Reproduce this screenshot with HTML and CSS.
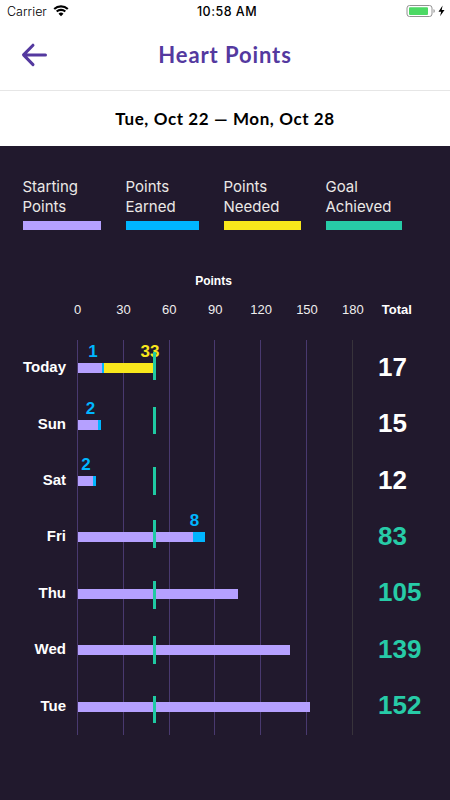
FILE: index.html
```html
<!DOCTYPE html>
<html lang="en">
<head>
  <meta charset="UTF-8">
  <meta name="viewport" content="width=device-width, initial-scale=1.0">
  <title>Heart Points</title>
  <link rel="stylesheet" href="styles.css">
</head>
<body>
  <div class="status-bar">
    <div class="carrier">
      <span>Carrier</span>
      <svg width="16" height="12" viewBox="0 0 16 12">
        <path d="M1.2 4.1a9.8 9.8 0 0 1 13.6 0M3.7 6.6a6.2 6.2 0 0 1 8.6 0" fill="none" stroke="#000" stroke-width="2.1"/>
        <path d="M8 11.3L5.5 8.8a3.6 3.6 0 0 1 5 0z"/>
      </svg>
    </div>
    <div class="time">10:58 AM</div>
    <div class="battery">
      <svg width="40" height="14" viewBox="0 0 40 14">
        <rect x="1" y="1.5" width="25" height="11" rx="2.5" fill="#fff" stroke="#929292"/>
        <rect x="3" y="3.2" width="19" height="7.8" rx="1" fill="#4cd964"/>
        <path d="M27.5 5v4q1.3-.6 1.3-2t-1.3-2z" fill="#929292"/>
        <path d="M36.6 1.4L32.5 7.7h2.6l-1 4.5L38.5 6h-2.8z"/>
      </svg>
    </div>
  </div>

  <header class="header">
    <svg class="back" width="28" height="26" viewBox="0 0 28 26">
      <path d="M13 3.2L3.5 12.9L13 22.6M4 12.9H25.5" fill="none" stroke="#54399f" stroke-width="3" stroke-linecap="round" stroke-linejoin="round"/>
    </svg>
    <h1>Heart Points</h1>
  </header>

  <div class="date-range">Tue, Oct 22 — Mon, Oct 28</div>

  <main class="content">
    <div class="legend">
      <div class="legend-item starting">Starting<br>Points</div>
      <div class="legend-item earned">Points<br>Earned</div>
      <div class="legend-item needed">Points<br>Needed</div>
      <div class="legend-item achieved">Goal<br>Achieved</div>
    </div>

    <div class="axis-title">Points</div>
    <div class="axis">
      <div class="scale">
        <span>0</span><span>30</span><span>60</span><span>90</span><span>120</span><span>150</span><span>180</span>
      </div>
      <div class="total-title">Total</div>
    </div>

    <div class="chart">
      <div class="gridlines">
        <i></i><i></i><i></i><i></i><i></i><i></i><i></i>
      </div>
      <div id="rows" class="rows"></div>
    </div>
  </main>

  <script src="chart.js"></script>
</body>
</html>
```
FILE: styles.css
```css
* {
  box-sizing: border-box;
}
body {
  margin: 0;
  width: 450px;
  height: 800px;
  overflow: hidden;
  display: flex;
  flex-direction: column;
  background: #fff;
  font-family: "Liberation Sans", Arial, sans-serif;
}
svg {
  display: block;
}
.status-bar {
  height: 22px;
  display: grid;
  grid-template-columns: 1fr 80px 1fr;
  align-items: center;
  font-family: Inter, sans-serif;
  font-size: 12.5px;
  color: #000;
}
.carrier {
  display: flex;
  align-items: center;
  gap: 6px;
  padding-left: 7px;
  font-weight: 300;
}
.time {
  padding-left: 4px;
  text-align: center;
  font-weight: 500;
  white-space: nowrap;
  letter-spacing: 0.5px;
}
.battery {
  display: flex;
  justify-content: flex-end;
  padding-right: 4px;
}
.header {
  height: 69px;
  display: grid;
  grid-template-columns: 70px 1fr 70px;
  align-items: center;
  border-bottom: 1px solid #e6e6e6;
}
.back {
  margin-left: 20px;
  margin-top: -3px;
}
.header h1 {
  margin: 0;
  padding-bottom: 4px;
  text-align: center;
  font-family: Lato, sans-serif;
  font-size: 22px;
  font-weight: 700;
  letter-spacing: 0.9px;
  color: #54399f;
}
.date-range {
  height: 55px;
  line-height: 56px;
  text-align: center;
  font-family: Lato, sans-serif;
  font-size: 17px;
  font-weight: 700;
  letter-spacing: 0.6px;
  color: #000;
}
.content {
  flex: 1;
  background: #21192d;
  color: #fff;
}
.legend {
  display: grid;
  grid-template-columns: 78px 73px 77px 76px;
  column-gap: 25px;
  padding: 31px 0 0 22.5px;
  font-family: Inter, sans-serif;
  font-size: 15px;
  line-height: 19.5px;
  color: #ebe8e6;
}
.legend-item::after {
  content: "";
  display: block;
  height: 9px;
  margin-top: 5px;
}
.starting::after {
  background: #b5a0ff;
}
.earned::after {
  background: #00b5ff;
}
.needed::after {
  background: #f8e71c;
}
.achieved::after {
  background: #27cba7;
}
.axis-title {
  width: 275px;
  margin: 44px 0 0 76px;
  text-align: center;
  font-size: 12px;
  font-weight: bold;
  line-height: 14px;
}
.axis {
  display: flex;
  margin-top: 14px;
  font-size: 13px;
  line-height: 15px;
}
.scale {
  display: grid;
  grid-template-columns: repeat(7, 45.9px);
  margin-left: 54.6px;
  text-align: center;
  color: #f0eeee;
}
.total-title {
  margin-left: 6px;
  font-weight: bold;
}
.chart {
  display: grid;
  margin-top: 23px;
  height: 395px;
}
.gridlines,
.rows {
  grid-area: 1 / 1;
}
.gridlines {
  display: flex;
  justify-content: space-between;
  width: 276px;
  margin-left: 77px;
}
.gridlines i {
  width: 1px;
  background: #49396f;
}
.gridlines i:last-child {
  background: #38333b;
}
.rows {
  display: grid;
  grid-template-rows: repeat(7, 1fr);
  z-index: 1;
}
.row {
  display: grid;
  grid-template-columns: 66px 275px 1fr;
  column-gap: 12px;
  align-items: center;
}
.day {
  padding-bottom: 3px;
  text-align: right;
  font-size: 15px;
  font-weight: bold;
}
.track {
  position: relative;
  display: flex;
  height: 10px;
}
.segment {
  height: 10px;
}
.segment.starting-bar {
  background: #b5a0ff;
}
.segment.earned-bar {
  background: #00b5ff;
}
.segment.needed-bar {
  background: #f8e71c;
}
/* value labels and the goal mark sit over the bars */
.value {
  position: absolute;
  bottom: 13px;
  transform: translateX(-50%);
  font-size: 17px;
  line-height: 17px;
  font-weight: bold;
  color: #00b5ff;
}
.value.missing {
  color: #f8e71c;
}
.goal {
  position: absolute;
  left: 75px;
  width: 2.5px;
  height: 27.5px;
  background: #1fc9a2;
}
.total {
  margin-left: 13px;
  padding-bottom: 3px;
  font-size: 26px;
  font-weight: bold;
  line-height: 30px;
}
.total.reached {
  color: #27cba7;
}
```
FILE: chart.js
```js
const scale = 275 / 180;

// goalTop is the offset of the goal mark from the top of the bar
const days = [
  { day: 'Today', start: 16, earned: 1, needed: 33, total: 17, label: 15, goalTop: -11 },
  { day: 'Sun', start: 13, earned: 2, total: 15, label: 12.5, goalTop: -13 },
  { day: 'Sat', start: 10, earned: 2, total: 12, label: 8, goalTop: -9 },
  { day: 'Fri', start: 75, earned: 8, total: 83, label: 116.5, goalTop: -12 },
  { day: 'Thu', start: 105, total: 105, goalTop: -7.5 },
  { day: 'Wed', start: 139, total: 139, goalTop: -9 },
  { day: 'Tue', start: 152, total: 152, goalTop: -6 }
];

function segment(name, points) {
  return points ? `<div class="segment ${name}-bar" style="width: ${points * scale}px"></div>` : '';
}

document.getElementById('rows').innerHTML = days.map(d => `
  <div class="row">
    <div class="day">${d.day}</div>
    <div class="track">
      ${segment('starting', d.start)}${segment('earned', d.earned)}${segment('needed', d.needed)}
      ${d.earned ? `<span class="value" style="left: ${d.label}px">${d.earned}</span>` : ''}
      ${d.needed ? `<span class="value missing" style="left: 72px">${d.needed}</span>` : ''}
      <div class="goal" style="top: ${d.goalTop}px"></div>
    </div>
    <div class="total${d.total >= 50 ? ' reached' : ''}">${d.total}</div>
  </div>
`).join('');
```
